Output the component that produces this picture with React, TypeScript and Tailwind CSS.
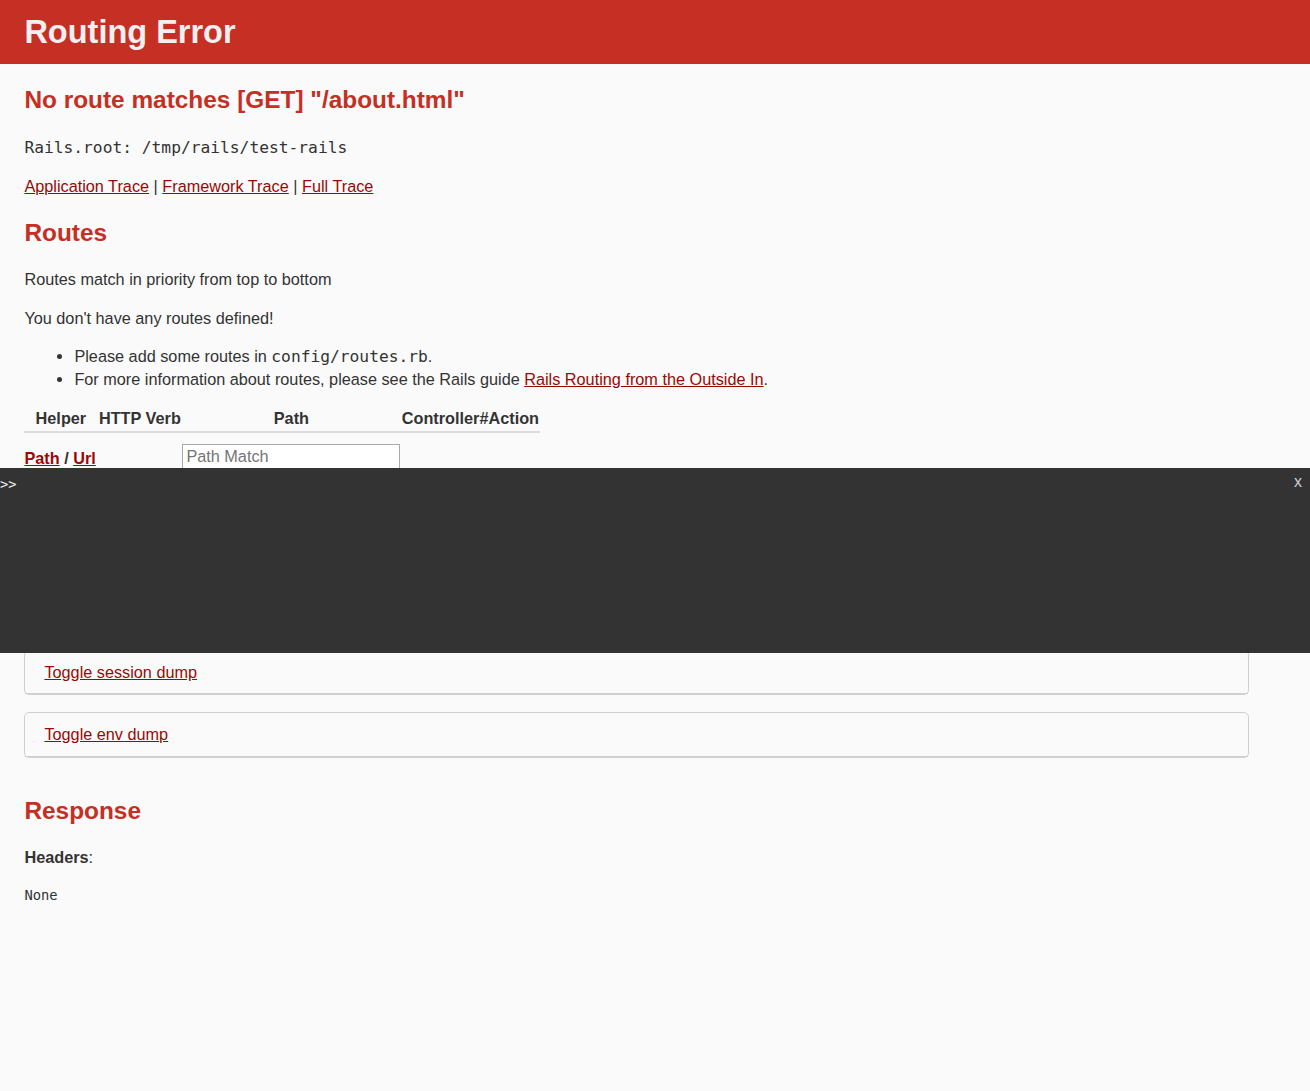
import { memo } from 'react';

const sans = "font-['Liberation_Sans',Arial,Helvetica,sans-serif]";
const mono = "font-['DejaVu_Sans_Mono',monospace]";

function TraceLinks() {
    return (
        <div className="mt-[15px] leading-[22.5px]">
            <a href="#" className="text-[#980905] underline">
                Application Trace
            </a>{' '}
            |{' '}
            <a href="#" className="text-[#980905] underline">
                Framework Trace
            </a>{' '}
            |{' '}
            <a href="#" className="text-[#980905] underline">
                Full Trace
            </a>
        </div>
    );
}

function RouteTable() {
    return (
        <table className="mt-[15px] w-[516px] table-fixed border-collapse">
            <colgroup>
                <col className="w-[73px]" />
                <col className="w-[85px]" />
                <col className="w-[218px]" />
                <col className="w-[140px]" />
            </colgroup>
            <thead>
                <tr className="border-b-[2.5px] border-[#ddd]">
                    <th className="py-[1px] text-center leading-[22.5px] font-bold">
                        Helper
                    </th>
                    <th className="py-[1px] text-center leading-[22.5px] font-bold">
                        HTTP Verb
                    </th>
                    <th className="py-[1px] text-center leading-[22.5px] font-bold">
                        Path
                    </th>
                    <th className="py-[1px] text-center leading-[22.5px] font-bold">
                        Controller#Action
                    </th>
                </tr>
                <tr>
                    <th className="pt-[13px] pb-[10px] text-left align-middle leading-[18.75px] font-bold">
                        <a href="#" className="text-[#980905] underline">
                            Path
                        </a>{' '}
                        /{' '}
                        <a href="#" className="text-[#980905] underline">
                            Url
                        </a>
                    </th>
                    <th />
                    <th className="pt-[11px] pb-[12px]">
                        <input
                            type="search"
                            placeholder="Path Match"
                            className={`${sans} block h-[26px] w-[218px] border border-[#a9a9a9] bg-white px-[3px] text-[16.25px] font-normal text-[#333] placeholder:text-[#757575]`}
                        />
                    </th>
                    <th />
                </tr>
            </thead>
        </table>
    );
}

function DumpBox({ label, top }: { label: string; top: string }) {
    return (
        <div
            className={`${top} w-[1225px] rounded-[5px] border border-[#D0D0D0]`}
        >
            <div className="border-b border-[#D0D0D0] px-[19px] py-[10px] leading-[22.5px]">
                <a href="#" className="text-[#980905] underline">
                    {label}
                </a>
            </div>
        </div>
    );
}

function WebConsole() {
    return (
        <div className="absolute top-[468px] right-0 left-0 h-[185px] bg-[#333]">
            <div
                className={`${mono} pt-[8px] text-[13.75px] leading-[16px] text-[#f0f0f0]`}
            >
                &gt;&gt;
            </div>
            <button
                className={`${sans} absolute top-[5px] right-[8px] text-[16px] leading-[18px] text-[#d0d0d0]`}
            >
                x
            </button>
        </div>
    );
}

function App() {
    return (
        <div
            className={`${sans} relative min-h-[1091px] bg-[#FAFAFA] text-[16.25px] leading-[22.5px] text-[#333]`}
        >
            <header className="flex h-[64px] items-center bg-[#C52F24] px-[24.4px] text-[#F0F0F0]">
                <h1 className="text-[32.5px] leading-[36px] font-bold">
                    Routing Error
                </h1>
            </header>

            <div className="px-[24.4px]">
                <h2 className="mt-[20px] text-[24.4px] leading-[31px] font-bold text-[#C52F24]">
                    No route matches [GET] &quot;/about.html&quot;
                </h2>
                <p className="mt-[21px] leading-[22.5px]">
                    <code className={`${mono} text-[16.25px]`}>
                        Rails.root: /tmp/rails/test-rails
                    </code>
                </p>

                <TraceLinks />

                <h2 className="mt-[20px] text-[24.4px] leading-[31px] font-bold text-[#C52F24]">
                    Routes
                </h2>
                <p className="mt-[20px]">
                    Routes match in priority from top to bottom
                </p>
                <p className="mt-[16px]">You don&apos;t have any routes defined!</p>
                <ul className="mt-[16px] list-disc pl-[50px]">
                    <li className="leading-[23px]">
                        Please add some routes in{' '}
                        <code className={`${mono} text-[16.25px] leading-none`}>
                            config/routes.rb
                        </code>
                        .
                    </li>
                    <li className="leading-[23px]">
                        For more information about routes, please see the Rails
                        guide{' '}
                        <a href="#" className="text-[#980905] underline">
                            Rails Routing from the Outside In
                        </a>
                        .
                    </li>
                </ul>

                <RouteTable />

                <h2 className="mt-[36px] text-[24.4px] leading-[31px] font-bold text-[#C52F24]">
                    Request
                </h2>
                <p className="mt-[20px]">
                    <b>Parameters</b>:
                </p>
                <pre className={`${mono} mt-[14px] text-[13.75px] leading-[22.5px]`}>
                    None
                </pre>

                <DumpBox label="Toggle session dump" top="mt-[22px]" />
                <DumpBox label="Toggle env dump" top="mt-[17px]" />

                <h2 className="mt-[37px] text-[24.4px] leading-[31px] font-bold text-[#C52F24]">
                    Response
                </h2>
                <p className="mt-[20px]">
                    <b>Headers</b>:
                </p>
                <pre className={`${mono} mt-[16px] text-[13.75px] leading-[22.5px]`}>
                    None
                </pre>
            </div>

            <WebConsole />
        </div>
    );
}

export default memo(App);
